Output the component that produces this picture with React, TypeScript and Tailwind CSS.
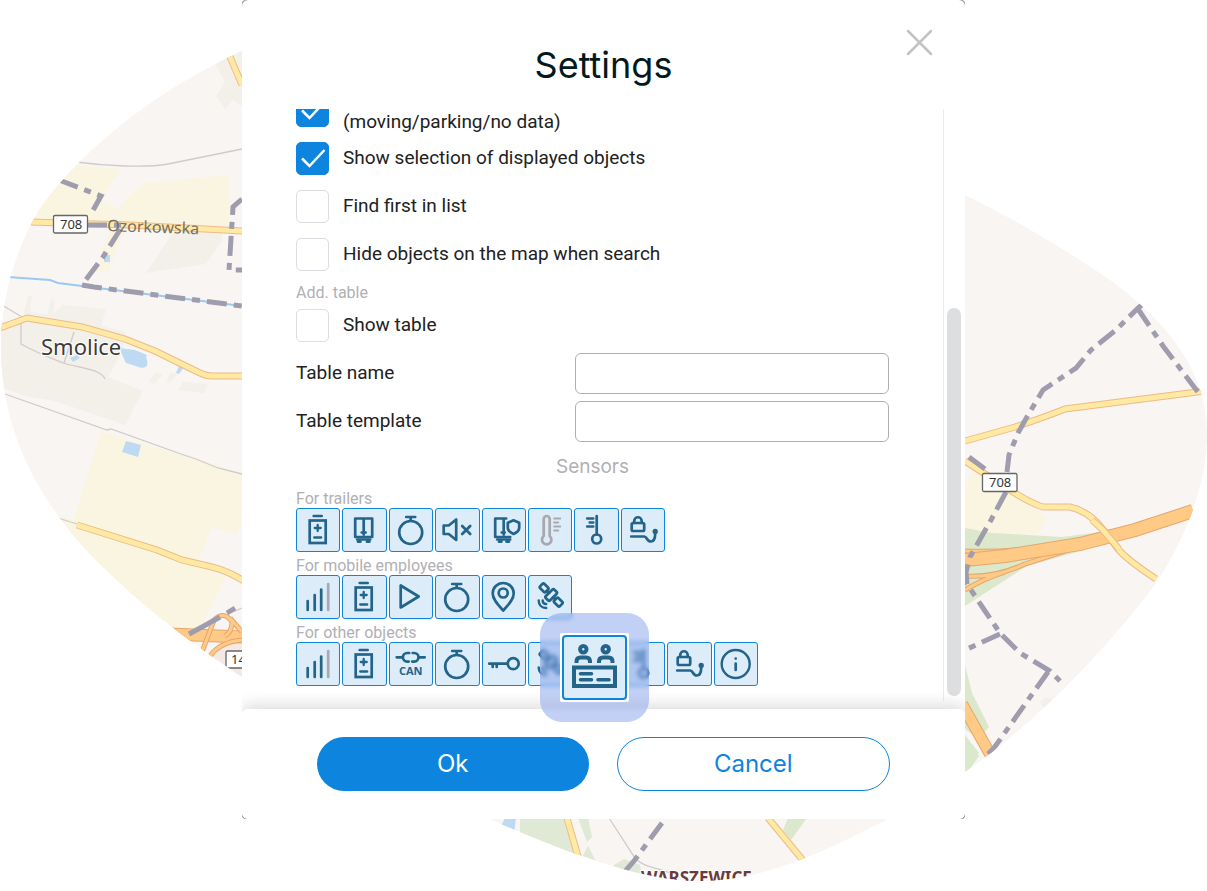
import React, { useState } from 'react';

interface IconProps {
    className?: string;
}

const TileSvg: React.FC<{ children: React.ReactNode }> = ({ children }) => (
    <svg
        viewBox="1 1 42 42"
        className="w-full h-full"
        fill="none"
        stroke="currentColor"
        strokeWidth="2.7"
        strokeLinecap="round"
        strokeLinejoin="round"
        aria-hidden="true"
    >
        {children}
    </svg>
);

const BatteryIcon = () => (
    <TileSvg>
        <path d="M17.5 8h8" />
        <rect x="13.5" y="12.5" width="16" height="22.5" strokeLinejoin="miter" />
        <path d="M21.5 17v6M18.5 20h6M18 29.5h7" strokeWidth="2.3" />
    </TileSvg>
);

const TrailerIcon = () => (
    <TileSvg>
        <path d="M13 29V10.5h17V29zM21.5 10.5v16" />
        <path d="M19.5 24.5h4M15 31.5h13" />
        <path d="M16 33.5h2M25 33.5h2" strokeWidth="3.2" />
    </TileSvg>
);

const TrailerShieldIcon = () => (
    <TileSvg>
        <path d="M24 10.5H13V29h15M21.5 10.5v16" />
        <path d="M19.5 24.5h3M15 31.5h13" />
        <path d="M17 33.5h2M24.5 33.5h2" strokeWidth="3.2" />
        <path d="M31.3 12.3l5.7 2.5v5c0 3.3-3 5-5.7 6.2-2.7-1.2-5.7-2.9-5.7-6.2v-5z" className="fill-[#dcecf9]" />
    </TileSvg>
);

const StopwatchIcon = () => (
    <TileSvg>
        <circle cx="21.5" cy="24.5" r="11.5" />
        <path d="M17 9h9M21.5 9v3" />
    </TileSvg>
);

const MuteIcon = () => (
    <TileSvg>
        <path d="M8.5 17.5h5l7.5-6v20.5l-7.500-6h-5z" />
        <path d="M27 18l8 8M35 18l-8 8" />
    </TileSvg>
);

const SignalIcon = () => (
    <TileSvg>
        <path d="M11.5 26v9M18.5 20v15M25 14.5v20.5" />
        <path d="M32 9v26" className="stroke-[#a9a9ad]" />
    </TileSvg>
);

const PlayIcon = () => (
    <TileSvg>
        <path d="M11.5 10.5v22l18-11z" />
    </TileSvg>
);

const PinIcon = () => (
    <TileSvg>
        <path d="M21 35.5c-5-5.500-10.500-11-10.500-17a10.500 10.500 0 0 1 21 0c0 6-5.500 11.500-10.500 17z" />
        <circle cx="21" cy="18" r="4.5" />
    </TileSvg>
);

const SatelliteIcon = () => (
    <TileSvg>
        <g transform="rotate(45 23 20)">
            <rect x="9" y="17" width="8" height="6" rx="1.500" />
            <rect x="20" y="14" width="6" height="12" rx="1.500" />
            <rect x="29" y="17" width="8" height="6" rx="1.500" />
            <path d="M17 20h3M26 20h3" />
        </g>
        <path d="M10.500 25.500c0 4.500 3 7.500 7.500 7.500M14.500 25.500c0 2.200 1.500 3.500 3.500 3.500" strokeWidth="2.4" />
    </TileSvg>
);

const CanIcon = () => (
    <TileSvg>
        <path d="M7.500 15.300h6M29.500 15.300h6" />
        <path d="M20 11h-2a4.300 4.300 0 0 0 0 8.600h1.500M23.500 11h1.500a4.300 4.300 0 0 1 0 8.600h-2" />
        <text x="21.500" y="32.500" textAnchor="middle" className="fill-current stroke-none font-['Open_Sans',sans-serif] text-[11px] font-bold">
            CAN
        </text>
    </TileSvg>
);

const KeyIcon = () => (
    <TileSvg>
        <circle cx="31" cy="21.7" r="5.5" />
        <path d="M25 21.700H7M10.500 22v3M14.500 22v3" />
    </TileSvg>
);

const GaugeIcon = () => (
    <TileSvg>
        <g className="stroke-[#a9a9ad]">
            <path d="M15.500 28V11a3 3 0 0 1 6 0v17a4.700 4.700 0 1 1-6 0z" />
            <path d="M26 10.500h6M26 14.500h4M26 18.500h6M26 22.500h4" strokeWidth="2" />
        </g>
    </TileSvg>
);

const ThermometerIcon = () => (
    <TileSvg>
        <path d="M22.500 8v18.500" />
        <circle cx="22.5" cy="31" r="4.5" />
        <path d="M13 10.500h6M15.500 14.500h3.500M13 18.500h6" />
    </TileSvg>
);

const LockHookIcon = () => (
    <TileSvg>
        <rect x="10.5" y="15" width="12.5" height="8" rx="1.5" />
        <path d="M13 15v-2a3.700 3.700 0 0 1 7.500 0v2" />
        <path d="M10 28.500h13c3 0 2.500 5 6.500 5s4.500-4 4.500-8" />
        <circle cx="34" cy="23.5" r="1.3" className="fill-current" />
    </TileSvg>
);

const InfoIcon = () => (
    <TileSvg>
        <circle cx="21.5" cy="22" r="14" strokeWidth="2.4" />
        <path d="M21.500 21.500v6.500M21.500 16.500v.1" />
    </TileSvg>
);

const ReceptionIcon: React.FC<IconProps> = ({ className }) => (
    <svg viewBox="2 2 61 61" className={className} fill="none" stroke="currentColor" strokeWidth="4" strokeLinecap="round" aria-hidden="true">
        <circle cx="21.3" cy="14.3" r="3.2" />
        <circle cx="43.7" cy="14.3" r="3.2" />
        <path d="M14.500 28v-1.500c0-2.500 1.500-4 4-4h5.500c2.500 0 4 1.500 4 4v1.500M37 28v-1.500c0-2.500 1.500-4 4-4h5.500c2.500 0 4 1.500 4 4v1.500" strokeLinecap="butt" />
        <rect x="12" y="32.5" width="41" height="18.5" />
        <path d="M18.500 38.700h11M18.500 44.700h11M36 44.700h11" strokeWidth="3.6" />
    </svg>
);

const border = {
    fill: 'none',
    stroke: '#9f9cae',
    strokeWidth: 5,
    strokeDasharray: '20 7 7 7',
};

const Road: React.FC<{ d: string; width?: number; major?: boolean }> = ({ d, width = 7, major = false }) => (
    <g fill="none">
        <path d={d} stroke={major ? '#e6a66b' : '#eebb87'} strokeWidth={width} />
        <path d={d} stroke={major ? '#ffca85' : '#ffe9a3'} strokeWidth={width - 2} />
    </g>
);

const MapBackground = () => (
    <svg viewBox="0 0 1207 891" className="absolute top-0 left-0 w-full h-auto" aria-hidden="true">
        <defs>
            <clipPath id="blob">
                <path d="M242 51C150 93 77 155 39 210C14 252 1 300 1 345C1 420 28 482 77 540C120 587 170 629 242 677C330 735 410 787 487 818C560 850 640 881 697 881C770 881 830 848 890 818L965 772C1040 720 1110 645 1157 582C1190 530 1207 480 1207 433C1207 372 1168 322 1110 280C1050 239 1000 212 965 195L700 60L242 51Z" />
            </clipPath>
        </defs>
        <g clipPath="url(#blob)">
            <rect width="1207" height="891" fill="#f8f5f3" />

            {/* fields, built-up areas and woods */}
            <path d="M60 164l61 5-20 30 16 10-10 16-85-6z" fill="#f9f5e1" />
            <path d="M148 188l81-13v51l-106 0-15 46-13-1z" fill="#f9f5e1" />
            <path d="M118 208l26-25 85-8v51h-103l-18 45-13-1z" fill="#f9f5e1" />
            <path d="M175 230h47v11l-16 23-60 9z" fill="#f3f0ea" />
            <path d="M213 60l12 22-9 14 9 13 8-9 9 6V40z" fill="#f3f0ea" />
            <path d="M0 322l22 0 6-27 4 1-2 15 17 4 4-16 4 1-2 14 9-9 44 4-5 17 25 6-3 18-15 27 35 14-18 34-70-24-27-4-28-10z" fill="#f3f0ea" />
            <path d="M155 372l8 2-8 10-6-2zM183 382l25 2-4 9-26-3zM170 372l8 2-8 9-4-1z" fill="#f3f0ea" />
            <path d="M101 432l111 31 30 12v48l-6 11-25-6-13 34-6 40 14 8-3 20-23 8-70-12-60-93 22-7z" fill="#f9f5e1" />
            <path d="M226 576l-21 42-25 11-60-30-60-83z" fill="#f9f5e1" />
            <path d="M208 655l20-13h20v50z" fill="#f6e8e4" />
            <path d="M965 485l10-17 71 49-8 17h-73z" fill="#f9f5e1" />
            <path d="M965 528l27 5 70 4 38-5 20 8-93 26-62 40z" fill="#dbe8cb" />
            <path d="M965 665l7 28 17 34-10 12-14-10v40l14-16-14-18z" fill="#dbe8cb" />
            <path d="M965 735l14 21-14 20z" fill="#dbe8cb" />
            <path d="M1040 702l6-5 7 3-9 8z" fill="#f3f0ea" />
            <path d="M520 818h49l10 40-59-22z" fill="#dfe9d5" />
            <path d="M578 818h10l4 19-5 5zM588 846l8 15-14-4zM614 865l10-6 16 6 2 10-30-6z" fill="#dfe9d5" />
            <path d="M788 818h19l-16 22-8-10z" fill="#dbe8cb" />

            {/* water */}
            <path d="M104 255h6v7h-6zM126 441l15 4-3 12-16-5z" fill="#bedaf3" />
            <path d="M119 348l16 2 12 5-5 13-16-5zM136 354c8-1 13 4 11 12-6 4-10 1-12-4zM70 358l7-3 3 3-7 4zM179 366l5 1-5 7-3-1z" fill="#bedaf3" />
            <path d="M505 818h11l-2 16-13-8z" fill="#bedaf3" />
            <path d="M8 277l42 3 8 3 184 23" fill="none" stroke="#9cc8f2" strokeWidth="2" />

            {/* tracks */}
            <g fill="none" stroke="#cfccc8" strokeWidth="1.3">
                <path d="M76 162c30 4 70 6 92 2l74-15" />
                <path d="M2 305l20 12M21 323v21c14 8 27 13 42 19 16 5 38 6 42 16M74 332l-10 31" />
                <path d="M5 394l102 36 4-1 70 25 15 5 22 9 24 6" />
                <path d="M58 518l19 6" />
                <path d="M609 818l26 40c8 9 20 9 35 15" />
                <path d="M228 614l14-6" />
            </g>

            {/* roads */}
            <Road d="M228 52l14 33" />
            <Road d="M30 222l100 3 112 6" />
            <Road d="M0 328l27-10 55 9 43 12 30 12 45 22q6 3 12 3h32" />
            <Road d="M77 525l80 25 25 10 30 7q16 4 32 14" />
            <Road d="M965 441l50-14q30-10 50-18l140-18" />
            <Road d="M965 461l20 13 33 21q15 9 25 12h27q18 4 31 20l17 22q8 10 38 30" />
            <Road d="M567 818l12 42" />
            <Road d="M768 818l38 46" />
            <Road d="M965 551q50 2 100-8M965 576q30 2 60-12l80-26M965 590q20-12 40-18" width={5} major />
            <Road d="M965 560l40-4 75-12 55-14 58-19" width={14} major />
            <Road d="M1092 520l10 9 17 20" />
            <Road d="M962 704l28 50" width={12} major />
            <Road d="M170 634l72 3" width={13} major />
            <Road d="M202 652l12-32q10-10 18 2 0 10-7 14M230 618l12 14M210 656q10-14 32-16" width={5} major />

            {/* administrative borders */}
            <path d="M59 180l42 16-10 18M87 225h36l-20 32-21 28" {...border} />
            <path d="M82 285l12 2 148 19" {...border} strokeDasharray="20 7 8 7" />
            <path d="M242 199l-9 8-4 63h13" {...border} />
            <path d="M189 634l13-7M202 627l18-10M227 613l8-5" {...border} strokeDasharray="none" />
            <path d="M1144 303l-7 6-21 21-25 20-15 18-18 12-15 10-15 25-10 18-9 22-2 17" {...border} />
            <path d="M1138 309l25 37 38 50" {...border} />
            <path d="M969 457l20 15M1006 492l-15 28-21 37-4 15 1 12 18 27 15 22 20 20 30 18 10 10" {...border} />
            <path d="M1000 634l-35 16M1048 672l-20 28-34 48-6 6" {...border} />
            <path d="M662 823l-28 38-12 14" {...border} />

            {/* labels */}
            <g className="font-['Noto_Sans',sans-serif]">
                <g fill="#fff" stroke="#666" strokeWidth="1.3">
                    <rect x="53.5" y="215.5" width="34" height="17.5" rx="1.5" />
                    <rect x="982.5" y="473.5" width="34.5" height="18" rx="1.5" />
                    <rect x="226" y="651" width="34" height="17" rx="1.5" />
                </g>
                <g fill="#333" fontSize="13">
                    <text x="60" y="229">708</text>
                    <text x="989" y="487">708</text>
                    <text x="231" y="664">14</text>
                </g>
                <text x="107" y="231" fontSize="16" fill="#776d62" transform="rotate(2 107 231)">Ozorkowska</text>
                <text x="41" y="355" fontSize="22" fill="#3c3c3c" stroke="#fff" strokeWidth="2" paintOrder="stroke">Smolice</text>
                <text x="641" y="884" fontSize="17" fontWeight="bold" fill="#6b3a3a" stroke="#fff" strokeWidth="2" paintOrder="stroke">WARSZEWICE</text>
            </g>
        </g>
    </svg>
);

interface CheckRowProps {
    id: string;
    label: string;
    defaultChecked?: boolean;
    labelClassName?: string;
}

const CheckRow: React.FC<CheckRowProps> = ({ id, label, defaultChecked = false, labelClassName = '' }) => {
    const [checked, setChecked] = useState(defaultChecked);

    return (
        <div className="flex h-12 shrink-0 items-center gap-[14px]">
            <span className="relative h-[33px] w-[33px] shrink-0">
                <input
                    id={id}
                    type="checkbox"
                    checked={checked}
                    onChange={() => setChecked(!checked)}
                    className="block h-full w-full appearance-none rounded-[5px] border border-[#dcdce2] bg-white checked:border-[#0d84dd] checked:bg-[#0d84dd]"
                />
                {checked && (
                    <svg viewBox="0 0 33 33" className="pointer-events-none absolute inset-0" fill="none" stroke="#fff" strokeWidth="2.5">
                        <path d="M6 16.500l7.500 7.500L28.500 8" />
                    </svg>
                )}
            </span>
            <label htmlFor={id} className={`leading-6 ${labelClassName}`}>{label}</label>
        </div>
    );
};

const FieldRow: React.FC<{ id: string; label: string }> = ({ id, label }) => (
    <div className="flex h-12 shrink-0 items-center justify-between">
        <label htmlFor={id}>{label}</label>
        <input id={id} type="text" className="h-[41px] w-[314px] rounded-md border border-[#b0b0b4] bg-white px-3 outline-none" />
    </div>
);

interface Sensor {
    name: string;
    icon: React.ReactNode;
}

const sensorGroups: { title: string; sensors: Sensor[] }[] = [
    {
        title: 'For trailers',
        sensors: [
            { name: 'battery', icon: <BatteryIcon /> },
            { name: 'trailer', icon: <TrailerIcon /> },
            { name: 'stopwatch', icon: <StopwatchIcon /> },
            { name: 'mute', icon: <MuteIcon /> },
            { name: 'trailer guard', icon: <TrailerShieldIcon /> },
            { name: 'gauge', icon: <GaugeIcon /> },
            { name: 'temperature', icon: <ThermometerIcon /> },
            { name: 'hitch lock', icon: <LockHookIcon /> },
        ],
    },
    {
        title: 'For mobile employees',
        sensors: [
            { name: 'signal', icon: <SignalIcon /> },
            { name: 'battery', icon: <BatteryIcon /> },
            { name: 'motion', icon: <PlayIcon /> },
            { name: 'stopwatch', icon: <StopwatchIcon /> },
            { name: 'location', icon: <PinIcon /> },
            { name: 'satellite', icon: <SatelliteIcon /> },
        ],
    },
    {
        title: 'For other objects',
        sensors: [
            { name: 'signal', icon: <SignalIcon /> },
            { name: 'battery', icon: <BatteryIcon /> },
            { name: 'can', icon: <CanIcon /> },
            { name: 'stopwatch', icon: <StopwatchIcon /> },
            { name: 'ignition', icon: <KeyIcon /> },
            { name: 'satellite', icon: <SatelliteIcon /> },
            { name: 'passengers', icon: null },
            { name: 'temperature', icon: <ThermometerIcon /> },
            { name: 'hitch lock', icon: <LockHookIcon /> },
            { name: 'info', icon: <InfoIcon /> },
        ],
    },
];

const App = () => {
    return (
        <div className="relative min-h-screen overflow-hidden bg-white font-['Roboto',sans-serif] text-[19px] text-[#212121]">
            <MapBackground />

            <div role="dialog" aria-labelledby="title" className="relative mx-auto max-w-[723px] rounded-[4px] bg-[#7f898b]">
                <div className="flex flex-col rounded-md bg-white">
                    <header className="relative flex h-[109px] items-center justify-center pt-5">
                        <h1 id="title" className="font-['Inter',sans-serif] text-4xl text-[#03191e]">Settings</h1>
                        <button type="button" aria-label="Close" className="absolute top-7 right-8 h-7 w-7">
                            <svg viewBox="0 0 28 28" fill="none" stroke="#c3c3c3" strokeWidth="2.5" strokeLinecap="round">
                                <path d="M3 3l23 23M26 3L3 26" />
                            </svg>
                        </button>
                    </header>

                    <div className="flex h-[600px] overflow-hidden">
                        <div className="flex flex-1 flex-col justify-end px-[54px] pb-[23px]">
                            <CheckRow id="status" defaultChecked label="(moving/parking/no data)" labelClassName="pt-6" />
                            <CheckRow id="selection" defaultChecked label="Show selection of displayed objects" />
                            <CheckRow id="first" label="Find first in list" />
                            <CheckRow id="hide" label="Hide objects on the map when search" />
                            <h3 className="flex h-[23px] shrink-0 items-end text-base leading-4 text-[#b0b0b4]">Add. table</h3>
                            <CheckRow id="table" label="Show table" />
                            <FieldRow id="name" label="Table name" />
                            <FieldRow id="template" label="Table template" />
                            <h2 className="shrink-0 text-center font-['Inter',sans-serif] leading-[44px] text-[#b0b0b4]">Sensors</h2>
                            {sensorGroups.map(group => (
                                <section key={group.title} className="mb-1 shrink-0 last:mb-0">
                                    <h3 className="text-base leading-[19px] text-[#b0b0b4]">{group.title}</h3>
                                    <div className="grid w-[462px] grid-cols-10 gap-0.5">
                                        {group.sensors.map(sensor => (
                                            <button
                                                key={sensor.name}
                                                type="button"
                                                aria-label={sensor.name}
                                                className="h-11 rounded-[3px] border border-[#0d84dd] bg-[#dcecf9] text-[#23658a]"
                                            >
                                                {sensor.icon}
                                            </button>
                                        ))}
                                    </div>
                                </section>
                            ))}
                        </div>
                        <div className="mb-2 flex w-[22px] flex-col justify-end border-l border-[#ececee] px-[3px] pb-[5px]">
                            <div className="h-[388px] w-[14px] rounded-full bg-[#dddee0]" />
                        </div>
                    </div>

                    <footer className="flex gap-7 rounded-md bg-white px-[75px] py-7 font-['Inter',sans-serif] text-2xl shadow-[0_-4px_16px_rgba(0,0,0,0.14)] [clip-path:inset(-30px_0_0_0)]">
                        <button type="button" className="h-[54px] flex-1 rounded-full bg-[#0d84dd] text-white">Ok</button>
                        <button type="button" className="h-[54px] flex-1 rounded-full border border-[#0d84dd] bg-white text-[#0d84dd]">Cancel</button>
                    </footer>
                </div>

                {/* enlarged sensor under the pointer */}
                <div className="absolute top-[613px] left-[298px] flex h-[109px] w-[109px] items-center justify-center rounded-[22px] bg-[#7797e8]/45 backdrop-blur-[2px]">
                    <div className="h-[69px] w-[69px] rounded-xs bg-white p-0.5">
                        <button type="button" aria-label="Passengers" className="block h-full w-full rounded-sm border-2 border-[#0d84dd] bg-[#dcecf9] text-[#23658a]">
                            <ReceptionIcon className="h-full w-full" />
                        </button>
                    </div>
                </div>
            </div>
        </div>
    );
};

export default App;
